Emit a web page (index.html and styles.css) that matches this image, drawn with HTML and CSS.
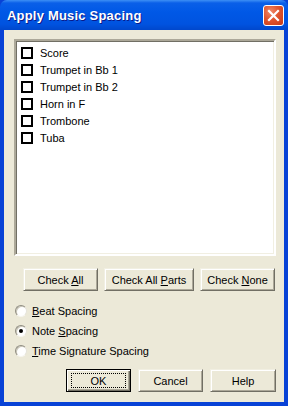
FILE: index.html
```html
<!DOCTYPE html>
<html lang="en">
<head>
<meta charset="UTF-8">
<title>Apply Music Spacing</title>
<link rel="stylesheet" href="styles.css">
</head>
<body>
<div class="window">
    <div class="titlebar">
        <span class="title">Apply Music Spacing</span>
        <button class="close" aria-label="Close">
            <svg width="13" height="13" viewBox="0 0 13 13"><path d="M2 2 L11 11 M11 2 L2 11" stroke="#fff" stroke-width="2.2" stroke-linecap="square"/></svg>
        </button>
    </div>
    <div class="client">
        <div class="listbox">
            <label class="item"><span class="check"></span><span>Score</span></label>
            <label class="item"><span class="check"></span><span>Trumpet in Bb 1</span></label>
            <label class="item"><span class="check"></span><span>Trumpet in Bb 2</span></label>
            <label class="item"><span class="check"></span><span>Horn in F</span></label>
            <label class="item"><span class="check"></span><span>Trombone</span></label>
            <label class="item"><span class="check"></span><span>Tuba</span></label>
        </div>
        <div class="checkrow">
            <button class="btn w75">Check <u>A</u>ll</button>
            <button class="btn w90">Check All <u>P</u>arts</button>
            <button class="btn w75">Check <u>N</u>one</button>
        </div>
        <div class="radios">
            <label class="radio"><span class="dot"></span><span><u>B</u>eat Spacing</span></label>
            <label class="radio"><span class="dot on"></span><span>Note <u>S</u>pacing</span></label>
            <label class="radio"><span class="dot"></span><span><u>T</u>ime Signature Spacing</span></label>
        </div>
        <div class="footer">
            <button class="btn w65 default"><span class="focus">OK</span></button>
            <button class="btn w65">Cancel</button>
            <button class="btn w66">Help</button>
        </div>
    </div>
</div>
</body>
</html>
```
FILE: styles.css
```css
* {
    box-sizing: border-box;
}
body {
    margin: 0;
    font-family: "Liberation Sans", Arial, sans-serif;
    font-size: 11px;
    color: #000;
}
.window {
    width: 288px;
    height: 406px;
    display: flex;
    flex-direction: column;
    background: #0842d6;
}
.titlebar {
    height: 30px;
    display: flex;
    align-items: center;
    justify-content: space-between;
    padding: 0 4px 0 7px;
    background: linear-gradient(#3d8ff5 0, #0a5fe8 3px, #0058e6 40%, #0053e0 80%, #0047cc 100%);
    border-radius: 7px 7px 0 0;
}
.title {
    color: #fff;
    font-weight: bold;
    font-size: 13px;
    text-shadow: 1px 1px #0a1a8a;
    letter-spacing: 0.2px;
    margin-top: 1px;
}
.close {
    width: 21px;
    height: 21px;
    padding: 0;
    border: 1px solid #fff;
    border-radius: 3px;
    background: radial-gradient(circle at 35% 30%, #f08a6a 0, #e0552f 45%, #c53a17 100%);
    display: flex;
    align-items: center;
    justify-content: center;
}
.client {
    flex: 1;
    margin: 0 4px 4px;
    background: #ece9d8;
    padding: 9px 8px 0 10px;
    display: flex;
    flex-direction: column;
}
.listbox {
    height: 217px;
    background: #fff;
    border: 2px solid;
    border-color: #aca899 #fff #fff #aca899;
    box-shadow: inset 1px 1px #716f64, inset -1px -1px #f1efe2;
    padding: 3px 0 0 5px;
}
.item {
    display: flex;
    align-items: center;
    height: 17px;
    gap: 7px;
}
.check {
    width: 12px;
    height: 12px;
    border: 2px solid #000;
    background: #fff;
}
.checkrow {
    display: flex;
    gap: 6px;
    margin: 12px 1px 0 9px;
    justify-content: flex-end;
}
.btn {
    height: 23px;
    padding: 0;
    font: inherit;
    color: #000;
    background: #ece9d8;
    border: 1px solid;
    border-color: #f1efe2 #716f64 #716f64 #f1efe2;
    box-shadow: inset 1px 1px #fff, inset -1px -1px #aca899;
}
.w75 { width: 75px; }
.w90 { width: 90px; }
.w65 { width: 65px; }
.w66 { width: 66px; }
.btn.default {
    border: 1px solid #000;
    box-shadow: inset 1px 1px #fff, inset -1px -1px #716f64, inset -2px -2px #aca899;
    padding: 3px 4px;
}
.focus {
    display: flex;
    align-items: center;
    justify-content: center;
    height: 100%;
    border: 1px dotted #000;
}
.radios {
    margin: 10px 0 0 1px;
    display: flex;
    flex-direction: column;
}
.radio {
    display: flex;
    align-items: center;
    height: 20px;
    gap: 5px;
}
.dot {
    width: 12px;
    height: 12px;
    border-radius: 50%;
    background: #fff;
    border: 1px solid;
    border-color: #8f8c80 #e5e3da #f6f5ef #8f8c80;
    box-shadow: inset 1px 1px #c9c6b8;
    position: relative;
}
.dot.on::after {
    content: "";
    position: absolute;
    left: 3px;
    top: 3px;
    width: 4px;
    height: 4px;
    border-radius: 50%;
    background: #000;
}
.footer {
    display: flex;
    gap: 7px;
    justify-content: flex-end;
    margin-top: 8px;
}
```
